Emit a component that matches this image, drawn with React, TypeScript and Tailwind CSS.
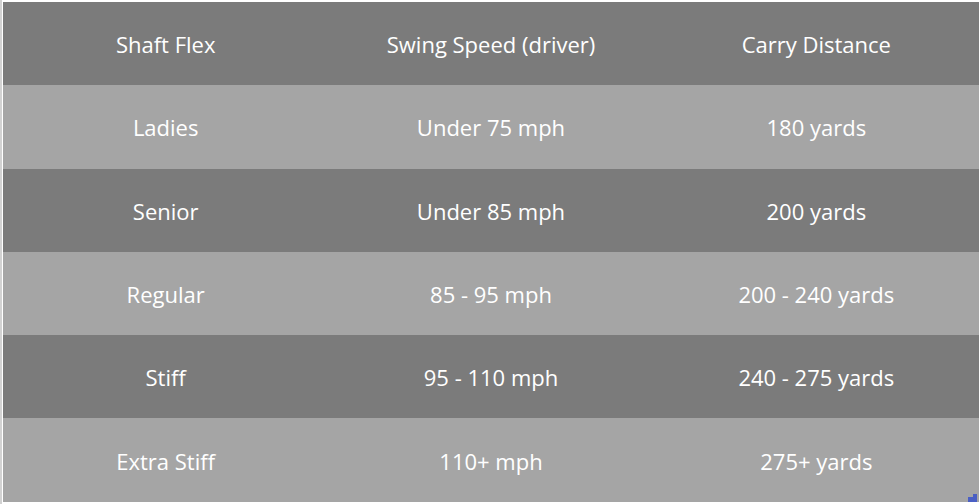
import React from "react";

const rows = [
  ["Shaft Flex", "Swing Speed (driver)", "Carry Distance"],
  ["Ladies", "Under 75 mph", "180 yards"],
  ["Senior", "Under 85 mph", "200 yards"],
  ["Regular", "85 - 95 mph", "200 - 240 yards"],
  ["Stiff", "95 - 110 mph", "240 - 275 yards"],
  ["Extra Stiff", "110+ mph", "275+ yards"],
];

const App = () => {
  return (
    <div className="relative w-[979px] h-[504px] bg-white pt-[2px] pl-[3px] font-['Open_Sans',sans-serif] text-[22px] text-white">
      <div className="absolute left-0 top-0 w-[2px] h-full bg-[#d2d2d2]" />
      {rows.map((row, i) => (
        <div
          key={i}
          className={`grid grid-cols-3 h-[83.3px] items-center text-center pt-[2px] ${
            i % 2 === 0 ? "bg-[#7b7b7b]" : "bg-[#a5a5a5]"
          }`}
        >
          {row.map((cell, j) => (
            <div key={j}>{cell}</div>
          ))}
        </div>
      ))}
      {/* resize handle */}
      <div className="absolute right-[2px] bottom-[2px] flex items-end">
        <div className="w-[5px] h-[5px] bg-[#4a5fc4]" />
        <div className="w-[4px] h-[8px] bg-[#4a5fc4]" />
      </div>
    </div>
  );
};

export default App;
